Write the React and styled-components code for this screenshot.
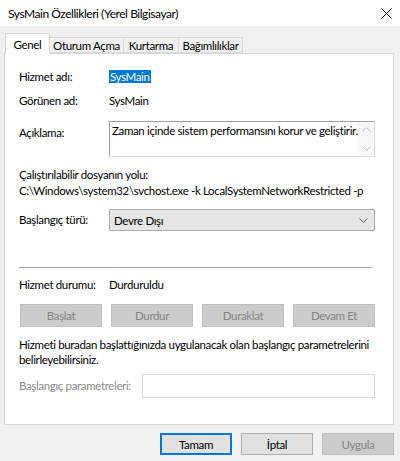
import React from 'react';
import styled, { createGlobalStyle } from 'styled-components';

const GlobalStyle = createGlobalStyle`
  html, body {
    margin: 0;
    padding: 0;
    background: #f0f0f0;
    font-family: Lato, "Liberation Sans", sans-serif;
    font-size: 11.5px;
    letter-spacing: -0.35px;
    color: #000;
  }
`;

const Window = styled.div`
  width: 400px;
  height: 461px;
  background: #f0f0f0;
  overflow: hidden;
  white-space: nowrap;
`;

const TitleBar = styled.div`
  height: 26px;
  background: #fff;
  display: flex;
  align-items: center;
  justify-content: space-between;
  padding: 0 7px 0 8px;
  font-size: 12px;
  letter-spacing: -0.45px;
`;

const CloseIcon = styled.svg`
  width: 11px;
  height: 11px;
  margin-right: 1px;
`;

const Body = styled.div`
  padding: 7px 6px 0 4px;
`;

const TabStrip = styled.div`
  display: flex;
  align-items: flex-end;
  height: 20px;
  padding-left: 1px;
`;

const Tab = styled.div`
  height: ${p => (p.$active ? 21 : 16)}px;
  width: ${p => p.$w}px;
  box-sizing: border-box;
  display: flex;
  align-items: center;
  justify-content: center;
  background: ${p => (p.$active ? '#fff' : '#f0f0f0')};
  border: 1px solid #d9d9d9;
  border-bottom: ${p => (p.$active ? 'none' : '1px solid #d9d9d9')};
  margin-bottom: ${p => (p.$active ? -1 : 0)}px;
  position: relative;
  z-index: ${p => (p.$active ? 1 : 0)};
  padding-top: ${p => (p.$active ? 0 : 1)}px;
  & + & {
    border-left: none;
  }
`;

const Panel = styled.div`
  background: #fff;
  border: 1px solid #d9d9d9;
  height: 372px;
  box-sizing: border-box;
  padding: 15px 18px 0 14px;
`;

const Row = styled.div`
  display: flex;
  align-items: ${p => p.$align || 'center'};
  height: ${p => p.$h || 16}px;
  margin-top: ${p => p.$mt || 0}px;
`;

const Label = styled.div`
  width: ${p => p.$w || 90}px;
  flex: none;
  line-height: 16px;
  padding-top: ${p => p.$pt || 0}px;
  color: ${p => (p.$disabled ? '#8a8a8a' : '#000')};
`;

const Value = styled.div`
  line-height: 16px;
`;

const Selected = styled.span`
  background: #0078d7;
  color: #fff;
  padding: 0 1px;
  line-height: 13px;
  display: inline-block;
`;

const TextArea = styled.div`
  flex: 1;
  height: 36px;
  box-sizing: border-box;
  border: 1px solid #a0a0a0;
  border-right-color: #dcdcdc;
  border-bottom-color: #dcdcdc;
  display: flex;
  justify-content: space-between;
  padding: 2px 0 0 2px;
  line-height: 14px;
`;

const ScrollBar = styled.div`
  width: 16px;
  height: 33px;
  margin-top: -2px;
  background: #f7f7f7;
  display: flex;
  flex-direction: column;
  align-items: center;
  justify-content: space-between;
  padding: 5px 0 4px;
  box-sizing: border-box;
`;

const Plain = styled.div`
  line-height: 16px;
  margin-top: ${p => p.$mt || 0}px;
`;

const Select = styled.div`
  flex: 1;
  height: 22px;
  box-sizing: border-box;
  background: #e5e5e5;
  border: 1px solid #adadad;
  display: flex;
  align-items: center;
  justify-content: space-between;
  padding: 0 6px 0 4px;
`;

const Separator = styled.div`
  height: 1px;
  background: #a0a0a0;
  margin: 36px 3px 0 0;
`;

const ButtonRow = styled.div`
  display: grid;
  grid-template-columns: repeat(4, 82px);
  column-gap: 9px;
  margin: 11px 0 0 1px;
`;

const Button = styled.div`
  height: ${p => p.$h || 23}px;
  width: ${p => p.$w || 'auto'};
  box-sizing: border-box;
  display: flex;
  align-items: center;
  justify-content: center;
  background: ${p => (p.$disabled ? '#cccccc' : '#e1e1e1')};
  color: ${p => (p.$disabled ? '#838383' : '#000')};
  border: ${p =>
    p.$primary ? '2px solid #0078d7' : p.$disabled ? '1px solid #bfbfbf' : '1px solid #adadad'};
`;

const Note = styled.div`
  line-height: 15px;
  margin-top: 10px;
`;

const Input = styled.div`
  flex: 1;
  height: 24px;
  box-sizing: border-box;
  border: 1px solid #d9d9d9;
`;

const Footer = styled.div`
  display: flex;
  justify-content: flex-end;
  gap: 9px;
  padding-top: 8px;
`;

const Chevron = ({ color = '#555', up }) => (
  <svg width="9" height="5" viewBox="0 0 9 5">
    <path
      d={up ? 'M0.5 4.5 L4.5 0.5 L8.5 4.5' : 'M0.5 0.5 L4.5 4.5 L8.5 0.5'}
      fill="none"
      stroke={color}
      strokeWidth="1"
    />
  </svg>
);

export default function App() {
  const tabs = [
    ['Genel', 45],
    ['Oturum Açma', 74],
    ['Kurtarma', 55],
    ['Bağımlılıklar', 64],
  ];

  return (
    <Window>
      <GlobalStyle />
      <TitleBar>
        <span>SysMain Özellikleri (Yerel Bilgisayar)</span>
        <CloseIcon viewBox="0 0 11 11">
          <path d="M0.5 0.5 L10.5 10.5 M10.5 0.5 L0.5 10.5" stroke="#000" strokeWidth="1" />
        </CloseIcon>
      </TitleBar>

      <Body>
        <TabStrip>
          {tabs.map(([name, w], i) => (
            <Tab key={name} $w={w} $active={i === 0}>
              {name}
            </Tab>
          ))}
        </TabStrip>

        <Panel>
          <Row>
            <Label>Hizmet adı:</Label>
            <Value>
              <Selected>SysMain</Selected>
            </Value>
          </Row>
          <Row $mt={8}>
            <Label>Görünen ad:</Label>
            <Value>SysMain</Value>
          </Row>
          <Row $mt={12} $h={36} $align="flex-start">
            <Label $pt={4}>Açıklama:</Label>
            <TextArea>
              <span>Zaman içinde sistem performansını korur ve geliştirir.</span>
              <ScrollBar>
                <Chevron up color="#c2c2c2" />
                <Chevron color="#c2c2c2" />
              </ScrollBar>
            </TextArea>
          </Row>

          <Plain $mt={10}>Çalıştırılabilir dosyanın yolu:</Plain>
          <Plain>C:\Windows\system32\svchost.exe -k LocalSystemNetworkRestricted -p</Plain>

          <Row $mt={10} $h={22}>
            <Label>Başlangıç türü:</Label>
            <Select>
              <span>Devre Dışı</span>
              <Chevron color="#606060" />
            </Select>
          </Row>

          <Separator />

          <Row $mt={9}>
            <Label>Hizmet durumu:</Label>
            <Value>Durduruldu</Value>
          </Row>

          <ButtonRow>
            <Button $disabled>Başlat</Button>
            <Button $disabled>Durdur</Button>
            <Button $disabled>Duraklat</Button>
            <Button $disabled>Devam Et</Button>
          </ButtonRow>

          <Note>
            Hizmeti buradan başlattığınızda uygulanacak olan başlangıç parametrelerini
            <br />
            belirleyebilirsiniz.
          </Note>

          <Row $mt={7} $h={24}>
            <Label $w={123} $disabled>
              Başlangıç parametreleri:
            </Label>
            <Input />
          </Row>
        </Panel>

        <Footer>
          <Button $primary $w="72px" $h={22}>
            Tamam
          </Button>
          <Button $w="72px" $h={22}>
            İptal
          </Button>
          <Button $disabled $w="72px" $h={22}>
            Uygula
          </Button>
        </Footer>
      </Body>
    </Window>
  );
}
